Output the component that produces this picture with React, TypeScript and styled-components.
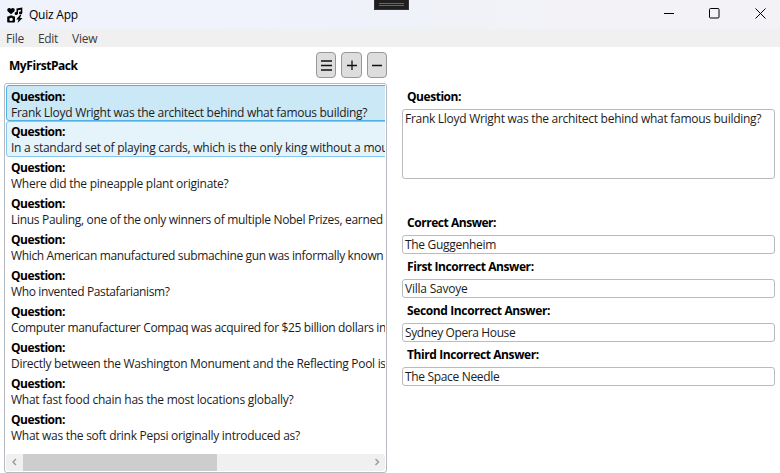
import React from "react";
import styled, { createGlobalStyle } from "styled-components";

const GlobalStyle = createGlobalStyle`
  * { box-sizing: border-box; }
  body { margin: 0; background: #fff; overflow: hidden; }
`;

const Window = styled.div`
  width: 780px;
  height: 473px;
  display: flex;
  flex-direction: column;
  background: #fff;
  color: #1c1c1c;
  font-family: "Open Sans", "Noto Sans", sans-serif;
  font-size: 12px;
  line-height: 16px;
  overflow: hidden;
  position: relative;
`;

const Text = styled.span<{ $track?: number }>`
  letter-spacing: ${(p) => p.$track ?? -0.28}px;
  white-space: nowrap;
`;

const Bold = styled(Text)`
  letter-spacing: ${(p) => p.$track ?? -0.46}px;
  font-weight: 700;
  color: #000;
`;

const TitleBar = styled.header`
  flex: none;
  height: 29px;
  display: flex;
  align-items: center;
  padding-left: 7px;
  background: linear-gradient(90deg, #eff3fb 0%, #eff2fa 45%, #f2f2f7 70%);
`;

const AppName = styled(Text)`
  flex: 1;
  margin-left: 6px;
  color: #000;
`;

const WindowButtons = styled.div`
  display: flex;
  align-items: center;
  margin: -3px -3px 0 0;
`;

const WindowButton = styled.div`
  width: 45.5px;
  height: 27px;
  display: flex;
  align-items: center;
  justify-content: center;
`;

const DebugHandle = styled.div`
  position: absolute;
  left: 374px;
  top: 0;
  width: 35px;
  height: 10px;
  background: #1f1f1f;
  border: 1px solid #353535;
  border-top: 0;
  padding: 3px 4px 0;
`;

const Grip = styled.div`
  height: 3px;
  border: solid #666;
  border-width: 1px 0;
`;

const MenuBar = styled.nav`
  flex: none;
  height: 17.5px;
  display: flex;
  gap: 14px;
  padding: 2px 6px 0;
  background: #f0f0f0;
  color: #3c3c3c;
`;

const Content = styled.main`
  flex: 1;
  display: flex;
  min-height: 0;
`;

const PackPane = styled.section`
  width: 387px;
  padding-left: 4px;
  display: flex;
  flex-direction: column;
`;

const PackHeader = styled.div`
  height: 36px;
  display: flex;
  align-items: center;
  gap: 5px;
  padding: 1px 0 0 5px;
`;

const PackName = styled(Bold)`
  flex: 1;
  padding-top: 2px;
`;

const ToolButton = styled.button`
  width: 20.3px;
  height: 26px;
  display: flex;
  align-items: center;
  justify-content: center;
  padding: 0;
  border: 1px solid #989898;
  border-radius: 4px;
  background: #dddddd;
`;

const ListBox = styled.div`
  height: 390px;
  display: flex;
  flex-direction: column;
  border: 1px solid #b7bac2;
  border-radius: 3px;
  padding: 1px 1px 0;
`;

const Items = styled.ul`
  flex: 1;
  margin: 0;
  padding: 0;
  list-style: none;
  overflow: hidden;
`;

type RowState = "selected" | "hover" | "idle";
const rowFill = { selected: "#cbe8f6", hover: "#e5f3fb", idle: "transparent" };
const rowLine = { selected: "#4fb0e4", hover: "#84c8ee", idle: "transparent" };

const Item = styled.li<{ $state: RowState }>`
  width: 600px;
  height: 36px;
  display: flex;
  flex-direction: column;
  padding: ${(p) => (p.$state === "selected" ? 3 : 2)}px 4px 0;
  border: 1px solid ${(p) => rowLine[p.$state]};
  border-radius: 3px;
  background: ${(p) => rowFill[p.$state]};
`;

const ScrollBar = styled.div`
  flex: none;
  height: 17px;
  margin-bottom: 1px;
  display: flex;
  background: #f0f0f0;
  border-radius: 3px;
`;

const ScrollArrow = styled.div`
  width: 17px;
  display: flex;
  align-items: center;
  justify-content: center;
`;

const ScrollTrack = styled.div`
  flex: 1;
`;

const ScrollThumb = styled.div`
  width: 194px;
  height: 17px;
  background: #cdcdcd;
`;

const EditorPane = styled.section`
  flex: 1;
  padding: 42px 5px 0 15px;
  display: flex;
  flex-direction: column;
`;

const Field = styled.label<{ $height: number; $after: number }>`
  height: ${(p) => p.$height}px;
  margin-bottom: ${(p) => p.$after}px;
  display: flex;
  flex-direction: column;
`;

const FieldLabel = styled(Bold)`
  flex: none;
  height: 20.5px;
  padding-left: 5px;
`;

const FieldBox = styled.div`
  flex: 1;
  border: 1px solid #b9bbc1;
  border-radius: 3px;
  padding: 0.5px 2px 0;
  line-height: 16px;
`;

const questions: { text: string; state?: RowState; track?: number }[] = [
  { text: "Frank Lloyd Wright was the architect behind what famous building?", state: "selected" },
  { text: "In a standard set of playing cards, which is the only king without a moustache?", state: "hover", track: -0.24 },
  { text: "Where did the pineapple plant originate?", track: -0.255 },
  { text: "Linus Pauling, one of the only winners of multiple Nobel Prizes, earned", track: -0.31 },
  { text: "Which American manufactured submachine gun was informally known", track: -0.35 },
  { text: "Who invented Pastafarianism?", track: -0.37 },
  { text: "Computer manufacturer Compaq was acquired for $25 billion dollars in", track: -0.35 },
  { text: "Directly between the Washington Monument and the Reflecting Pool is", track: -0.29 },
  { text: "What fast food chain has the most locations globally?", track: -0.25 },
  { text: "What was the soft drink Pepsi originally introduced as?" },
];

const answers: { label: string; value: string; labelTrack?: number; track?: number }[] = [
  { label: "Correct Answer:", value: "The Guggenheim", track: -0.3 },
  { label: "First Incorrect Answer:", value: "Villa Savoye", labelTrack: -0.42, track: -0.23 },
  { label: "Second Incorrect Answer:", value: "Sydney Opera House", labelTrack: -0.38, track: -0.38 },
  { label: "Third Incorrect Answer:", value: "The Space Needle", labelTrack: -0.4, track: -0.33 },
];

const AppLogo = () => (
  <svg width="16" height="16" viewBox="0 0 16 16" fill="#000">
    <path d="M4 7.300.9 4.500C-.5 2.900.6.900 2.200.900c.8 0 1.400.4 1.800 1C4.400 1.300 5 .900 5.800.900 7.400.900 8.500 2.900 7.100 4.500Z" />
    <path d="M9.500 1.400 15.300.5v5.400a1.700 1.500 0 1 1-1.500-1.500V2.800l-2.800.5v3.300a1.700 1.500 0 1 1-1.500-1.500Z" />
    <path fillRule="evenodd" d="M1.300 9.300h1l.6-.9h2.400l.6.9h1c.7 0 1.100.4 1.100 1.100v4c0 .7-.4 1.100-1.100 1.100H1.300c-.7 0-1.100-.4-1.100-1.100v-4c0-.7.4-1.100 1.100-1.100ZM4.100 10.700a1.700 1.700 0 1 0 0 3.400 1.700 1.700 0 0 0 0-3.400Z" />
    <path d="m12.900 8-3.700 4.600h2.400l-1 3.400 4.900-5.100h-2.500l1.300-2.900Z" />
  </svg>
);

export default function App() {
  return (
    <>
      <GlobalStyle />
      <Window>
        <TitleBar>
          <AppLogo />
          <AppName $track={-0.22}>Quiz App</AppName>
          <WindowButtons>
            <WindowButton>
              <svg width="10" height="10" stroke="#000"><path d="M0 5.500H10" /></svg>
            </WindowButton>
            <WindowButton>
              <svg width="11" height="11" fill="none" stroke="#000"><rect x=".5" y=".5" width="9.500" height="9.500" rx="1" /></svg>
            </WindowButton>
            <WindowButton>
              <svg width="11" height="11" stroke="#000"><path d="M.5.5l10 10M10.500.5l-10 10" /></svg>
            </WindowButton>
          </WindowButtons>
        </TitleBar>
        <DebugHandle><Grip /></DebugHandle>
        <MenuBar>
          <Text>File</Text>
          <Text>Edit</Text>
          <Text>View</Text>
        </MenuBar>
        <Content>
          <PackPane>
            <PackHeader>
              <PackName $track={-0.44}>MyFirstPack</PackName>
              <ToolButton aria-label="Pack options">
                <svg width="12" height="12" stroke="#111" strokeWidth="1.500"><path d="M1 2h11M1 6.500h11M1 11h11" /></svg>
              </ToolButton>
              <ToolButton aria-label="Add question">
                <svg width="10" height="10" stroke="#111" strokeWidth="1.300"><path d="M0 5.500h10M5 .5v10" /></svg>
              </ToolButton>
              <ToolButton aria-label="Remove question">
                <svg width="10" height="10" stroke="#111" strokeWidth="1.500"><path d="M0 5.500h10" /></svg>
              </ToolButton>
            </PackHeader>
            <ListBox>
              <Items>
                {questions.map((q) => (
                  <Item key={q.text} $state={q.state ?? "idle"}>
                    <Bold>Question:</Bold>
                    <Text $track={q.track}>{q.text}</Text>
                  </Item>
                ))}
              </Items>
              <ScrollBar>
                <ScrollArrow>
                  <svg width="6" height="8" fill="none" stroke="#999" strokeWidth="1.400"><path d="M4 1 1 4l3 3" /></svg>
                </ScrollArrow>
                <ScrollTrack><ScrollThumb /></ScrollTrack>
                <ScrollArrow>
                  <svg width="6" height="8" fill="none" stroke="#999" strokeWidth="1.400"><path d="m1.500 1 3 3-3 3" /></svg>
                </ScrollArrow>
              </ScrollBar>
            </ListBox>
          </PackPane>
          <EditorPane>
            <Field $height={90.500} $after={35.500}>
              <FieldLabel>Question:</FieldLabel>
              <FieldBox><Text>{questions[0].text}</Text></FieldBox>
            </Field>
            {answers.map((a) => (
              <Field key={a.label} $height={39} $after={5}>
                <FieldLabel $track={a.labelTrack}>{a.label}</FieldLabel>
                <FieldBox><Text $track={a.track}>{a.value}</Text></FieldBox>
              </Field>
            ))}
          </EditorPane>
        </Content>
      </Window>
    </>
  );
}
